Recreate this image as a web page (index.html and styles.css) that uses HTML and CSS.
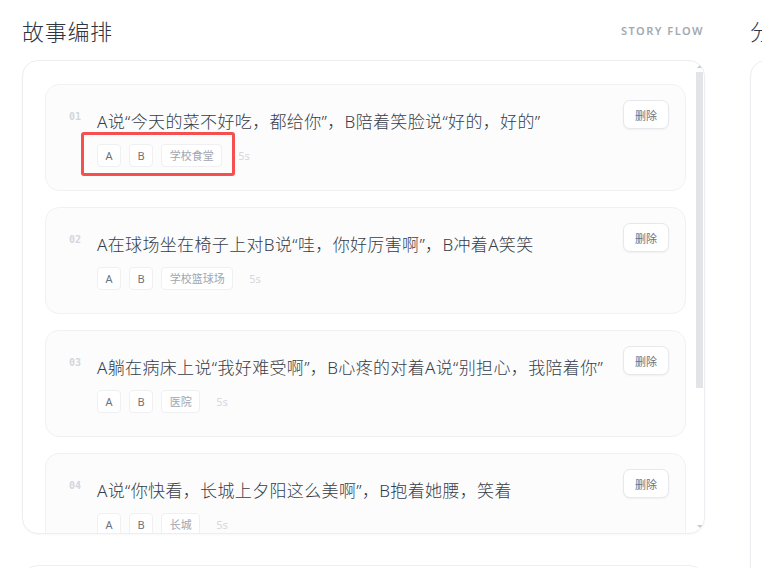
FILE: index.html
```html
<!DOCTYPE html>
<html lang="zh">
<head>
<meta charset="utf-8">
<title>故事编排</title>
<link rel="stylesheet" href="styles.css">
</head>
<body>
<div class="page">
  <section class="col">
    <header class="col-head">
      <h1 class="col-title">故事编排</h1>
      <span class="col-sub">STORY FLOW</span>
    </header>
    <div class="panel">
      <div class="scroll">
        <div class="list">
          <div class="card">
            <span class="num">01</span>
            <div class="body">
              <p class="line">A说“今天的菜不好吃，都给你”，B陪着笑脸说“好的，好的”</p>
              <div class="tags">
                <span class="tag">A</span>
                <span class="tag">B</span>
                <span class="tag place">学校食堂</span>
                <span class="dur">5s</span>
                <span class="mark"></span>
              </div>
            </div>
            <button class="del">删除</button>
          </div>
          <div class="card">
            <span class="num">02</span>
            <div class="body">
              <p class="line">A在球场坐在椅子上对B说“哇，你好厉害啊”，B冲着A笑笑</p>
              <div class="tags">
                <span class="tag">A</span>
                <span class="tag">B</span>
                <span class="tag place">学校篮球场</span>
                <span class="dur">5s</span>
              </div>
            </div>
            <button class="del">删除</button>
          </div>
          <div class="card">
            <span class="num">03</span>
            <div class="body">
              <p class="line">A躺在病床上说“我好难受啊”，B心疼的对着A说“别担心，我陪着你”</p>
              <div class="tags">
                <span class="tag">A</span>
                <span class="tag">B</span>
                <span class="tag place">医院</span>
                <span class="dur">5s</span>
              </div>
            </div>
            <button class="del">删除</button>
          </div>
          <div class="card">
            <span class="num">04</span>
            <div class="body">
              <p class="line">A说“你快看，长城上夕阳这么美啊”，B抱着她腰，笑着</p>
              <div class="tags">
                <span class="tag">A</span>
                <span class="tag">B</span>
                <span class="tag place">长城</span>
                <span class="dur">5s</span>
              </div>
            </div>
            <button class="del">删除</button>
          </div>
          <div class="card">
            <span class="num">05</span>
            <div class="body">
              <p class="line">A和B手牵着手走在海边，夕阳把两个人的影子拉得很长</p>
              <div class="tags">
                <span class="tag">A</span>
                <span class="tag">B</span>
                <span class="tag place">海边</span>
                <span class="dur">5s</span>
              </div>
            </div>
            <button class="del">删除</button>
          </div>
        </div>
      </div>
      <div class="sbar" aria-hidden="true">
        <span class="sbar-up"></span>
        <span class="sbar-thumb"></span>
        <span class="sbar-down"></span>
      </div>
    </div>
    <div class="panel panel-next">
      <p class="next-title">场景 · 人物与道具素材</p>
    </div>
  </section>
  <section class="col col-right">
    <header class="col-head">
      <h1 class="col-title">分镜预览</h1>
    </header>
    <div class="panel panel-right"></div>
  </section>
</div>
</body>
</html>
```
FILE: styles.css
```css
html, body {
  margin: 0;
  padding: 0;
  background: #ffffff;
  overflow: hidden;
}
body {
  font-family: "Noto Sans", "Noto Sans CJK SC", sans-serif;
  color: #374151;
}
.page {
  display: grid;
  grid-template-columns: 683px 320px;
  column-gap: 45px;
  padding: 0 22px;
  width: max-content;
}
.col {
  display: flex;
  flex-direction: column;
}
.col-head {
  display: flex;
  align-items: center;
  justify-content: space-between;
  height: 60px;
}
.col-title {
  margin: 0;
  font-size: 22px;
  font-weight: 300;
  line-height: 30px;
  letter-spacing: 0.7px;
  color: #2f3540;
  padding-top: 2px;
}
.col-sub {
  font-size: 11px;
  font-weight: 600;
  letter-spacing: 1.5px;
  color: #a3a8b2;
  margin-right: 1px;
}
.panel {
  position: relative;
  box-sizing: border-box;
  height: 474px;
  border: 1px solid #eceef1;
  border-radius: 16px;
  background: #fff;
  overflow: hidden;
  box-shadow: 0 1px 2px rgba(0, 0, 0, 0.03);
}
.scroll {
  padding: 23px 18px 23px 22px;
}
.sbar {
  position: absolute;
  top: 0;
  right: 0;
  bottom: 0;
  width: 10px;
}
.sbar-up,
.sbar-down {
  position: absolute;
  left: 3px;
  width: 0;
  height: 0;
  border-left: 3px solid transparent;
  border-right: 3px solid transparent;
}
.sbar-up {
  top: 4px;
  border-bottom: 3px solid #c6c9cf;
}
.sbar-down {
  bottom: 5px;
  border-top: 3px solid #c6c9cf;
}
.sbar-thumb {
  position: absolute;
  left: 2px;
  top: 11px;
  width: 7px;
  height: 316px;
  background: #e3e4e8;
}
.list {
  display: flex;
  flex-direction: column;
  gap: 16px;
}
.card {
  display: flex;
  align-items: flex-start;
  padding: 15px 16px 23px 23px;
  border: 1px solid #f0f1f3;
  border-radius: 14px;
  background: #fcfcfd;
}
.num {
  flex: 0 0 28px;
  margin-top: 11px;
  font-family: "DejaVu Sans Mono", monospace;
  font-size: 10px;
  line-height: 12px;
  font-weight: 700;
  color: #d3d6dc;
}
.body {
  flex: 1;
  padding-top: 9px;
}
.line {
  margin: 0;
  font-size: 17px;
  font-weight: 300;
  line-height: 26px;
  letter-spacing: 0.35px;
  color: #363d48;
}
.tags {
  position: relative;
  display: flex;
  align-items: center;
  gap: 8px;
  margin-top: 9px;
}
.tag {
  box-sizing: border-box;
  height: 23px;
  padding: 0 7.5px;
  border: 1px solid #eef0f2;
  border-radius: 4px;
  background: #fff;
  font-size: 11px;
  line-height: 21px;
  color: #6b7280;
}
.tag.place {
  color: #a0a6b0;
}
.dur {
  margin-left: 8px;
  font-size: 11px;
  color: #d5d8de;
}
.mark {
  position: absolute;
  left: -16px;
  top: -12px;
  width: 154px;
  height: 44px;
  box-sizing: border-box;
  border: 3px solid #f5504f;
  border-radius: 3px;
}
.del {
  flex: 0 0 auto;
  box-sizing: border-box;
  height: 29px;
  padding: 0 11px;
  border: 1px solid #e6e8eb;
  border-radius: 7px;
  background: #fff;
  font-family: "Noto Sans CJK SC", sans-serif;
  font-size: 11px;
  color: #6b7280;
  box-shadow: 0 1px 2px rgba(0, 0, 0, 0.05);
  margin-left: 12px;
}
.panel-next {
  margin-top: 31px;
}
.next-title {
  margin: -2px 0 0 36px;
  font-size: 15px;
  font-weight: 300;
  color: #b0b5be;
}
.panel-right {
  height: 600px;
}
```
